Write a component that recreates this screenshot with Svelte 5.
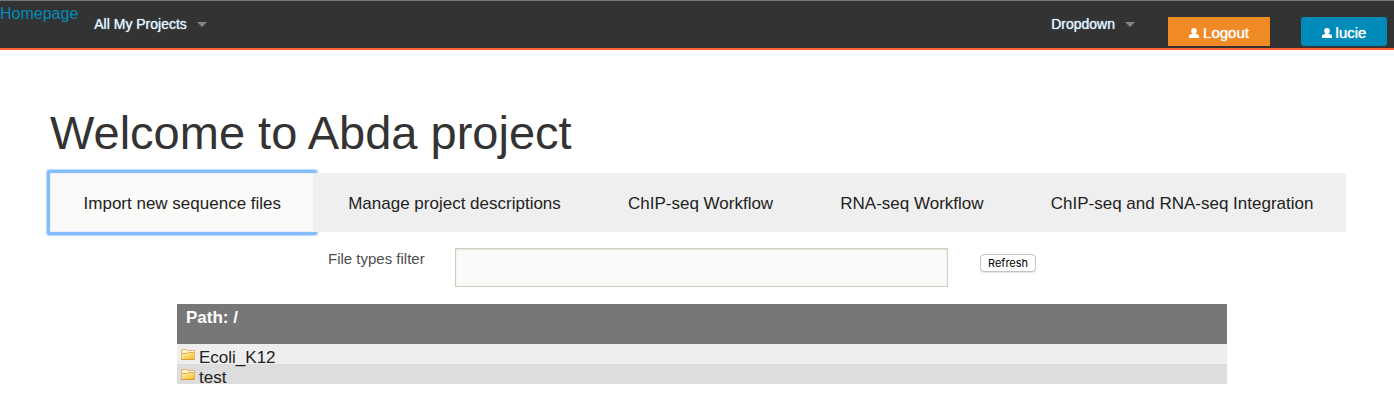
<script>
  const tabs = [
    'Import new sequence files',
    'Manage project descriptions',
    'ChIP-seq Workflow',
    'RNA-seq Workflow',
    'ChIP-seq and RNA-seq Integration'
  ];
  const folders = ['Ecoli_K12', 'test'];
  let active = $state(0);
  let filter = $state('');
</script>

{#snippet person()}
  <svg class="person" viewBox="0 0 10 10" aria-hidden="true">
    <path d="M5 0C3.200 0 2.200 1 2.200 2.800c0 1.300.5 2.300 1.200 2.900v.5H2C.8 6.200 0 7 0 8.200V10h10V8.200C10 7 9.200 6.200 8 6.200H6.600v-.5c.7-.6 1.200-1.600 1.200-2.900C7.800 1 6.800 0 5 0z" fill="#fff" />
  </svg>
{/snippet}

<header>
  <a class="home" href="#home">Homepage</a>
  <button class="menu">All My Projects <span class="caret"></span></button>
  <div class="right">
    <button class="menu">Dropdown <span class="caret"></span></button>
    <a class="action logout" href="#logout">{@render person()}Logout</a>
    <a class="action user" href="#user">{@render person()}lucie</a>
  </div>
</header>

<main>
  <h1>Welcome to Abda project</h1>
  <nav>
    {#each tabs as tab, i}
      <button class="tab" class:active={active === i} onclick={() => (active = i)}>{tab}</button>
    {/each}
  </nav>
</main>

<form onsubmit={(e) => e.preventDefault()}>
  <label for="filter">File types filter</label>
  <input id="filter" type="text" bind:value={filter} />
  <button class="refresh">Refresh</button>
</form>

<table>
  <thead>
    <tr><th>Path: /</th></tr>
  </thead>
  <tbody>
    {#each folders as folder}
      <tr>
        <td>
          <div class="entry">
            <svg viewBox="0 0 14 12" aria-hidden="true">
              <defs>
                <linearGradient id="gold" x1="0" y1="0" x2="1" y2="1">
                  <stop offset="0" stop-color="#fff6b0" />
                  <stop offset="1" stop-color="#f3bd28" />
                </linearGradient>
              </defs>
              <path d="M.5 10.500V.5h5l1 1h7v9z" fill="#fff6cf" stroke="#e6b273" />
              <path d="M1 10V5h5l1-1h6v6z" fill="url(#gold)" />
              <path d="M1 4.500h5l1-1h6" fill="none" stroke="#e3ad50" />
              <path d="M.5 10.500h13" fill="none" stroke="#dc9a3c" />
            </svg>
            <span>{folder}</span>
          </div>
        </td>
      </tr>
    {/each}
  </tbody>
</table>

<style>
  :global(body) {
    margin: 0;
    background: #fff;
    color: #222;
    font-family: "Liberation Sans", Arial, sans-serif;
  }
  button {
    font-family: inherit;
    border: 0;
    margin: 0;
    cursor: pointer;
  }
  header {
    box-sizing: border-box;
    height: 50px;
    display: flex;
    align-items: flex-start;
    background: #333;
    border-top: 1px solid #777;
    border-bottom: 2px solid #ff6633;
  }
  .home {
    color: #008cba;
    font-size: 16px;
    line-height: 26px;
    text-decoration: none;
  }
  .menu {
    display: flex;
    align-items: center;
    gap: 10px;
    padding: 0 15px 0 16px;
    height: 46px;
    background: none;
    color: #def3ff;
    font-size: 14px;
    text-shadow: 0 0 1px currentColor;
  }
  .caret {
    border: 5px solid transparent;
    border-top-color: #858585;
    border-bottom: 0;
  }
  .right {
    margin-left: auto;
    display: flex;
    padding-right: 7px;
  }
  .action {
    display: flex;
    align-items: center;
    justify-content: center;
    gap: 4px;
    box-sizing: border-box;
    height: 29px;
    margin-top: 16px;
    padding-top: 2px;
    color: #fff;
    font-size: 15px;
    text-decoration: none;
    text-shadow: 0 0 1px currentColor;
  }
  .logout {
    width: 102px;
    margin-left: 18px;
    background: #f08a24;
  }
  .user {
    width: 86px;
    margin-left: 31px;
    border-radius: 3px;
    background: #008cba;
  }
  .person {
    width: 10px;
    height: 10px;
  }
  main {
    padding: 54px 48px 0 50px;
  }
  h1 {
    margin: 0;
    color: #333;
    font-size: 47px;
    line-height: 58px;
    font-weight: 400;
  }
  nav {
    display: flex;
    margin-top: 11px;
    background: #efefef;
  }
  .tab {
    flex: 1 1 auto;
    height: 59px;
    padding: 2px 0 0 2px;
    background: #efefef;
    color: #222;
    font-size: 17px;
  }
  .tab:first-child {
    padding-left: 1px;
  }
  .tab.active {
    background: #fafaf8;
    border-radius: 1px;
    box-shadow: inset 0 0 0 1px #e8f1fa, 0 0 0 3px #85bdfb, 0 0 1px 4px #b4d6fc;
  }
  form {
    display: grid;
    grid-template-columns: 127px 493fr 446fr;
    align-items: start;
    margin-top: 16px;
    padding-left: 328px;
  }
  label {
    color: #4d4d4d;
    font-size: 15px;
    line-height: 22px;
  }
  input {
    box-sizing: border-box;
    width: 100%;
    height: 39px;
    padding: 0 8px;
    border: 1px solid #c8d2bd;
    border-radius: 0;
    outline: 0;
    background: #fafaf8;
    box-shadow: inset 0 1px 2px #0000001a;
    font-size: 15px;
  }
  .refresh {
    justify-self: start;
    margin: 6px 0 0 32px;
    height: 18px;
    padding: 0 7px;
    border: 1px solid #c3c3c3;
    border-radius: 4px;
    background: #fff;
    color: #000;
    box-shadow: 0 1px 0 #00000018;
    font-family: Inter, sans-serif;
    font-size: 11px;
    line-height: 16px;
  }
  table {
    width: calc(100% - 344px);
    margin: 17px 167px 0 177px;
    border-collapse: collapse;
  }
  th {
    height: 40px;
    padding: 4px 9px 0;
    box-sizing: border-box;
    background: #777;
    color: #fff;
    font-size: 17px;
    line-height: 20px;
    text-align: left;
    vertical-align: top;
  }
  td {
    padding: 0 4px;
    background: #eee;
  }
  tr:nth-child(even) td {
    background: #ddd;
  }
  .entry {
    display: flex;
    gap: 4px;
    height: 20px;
    color: #222;
    font-size: 17px;
    line-height: 28px;
  }
  .entry svg {
    width: 14px;
    height: 12px;
    margin-top: 5px;
  }
</style>
